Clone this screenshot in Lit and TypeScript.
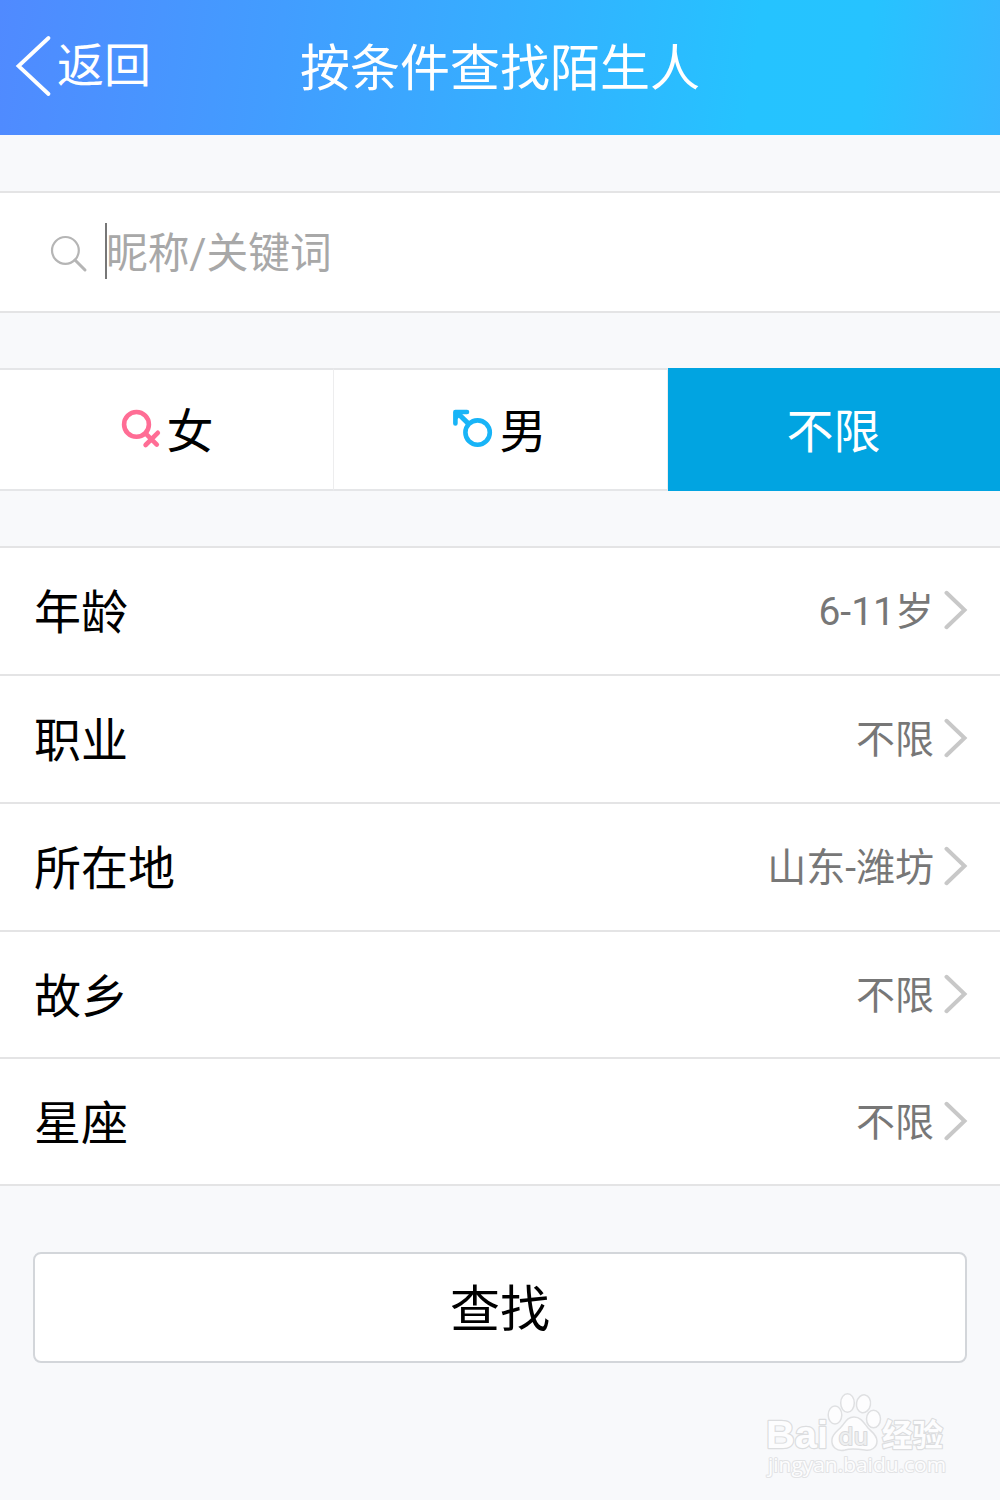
import { LitElement, html, css, svg } from "lit";
import { customElement, property, state } from "lit/decorators.js";

interface FilterRow {
  label: string;
  value: string;
}

const ROWS: FilterRow[] = [
  { label: "年龄", value: "6-11岁" },
  { label: "职业", value: "不限" },
  { label: "所在地", value: "山东-潍坊" },
  { label: "故乡", value: "不限" },
  { label: "星座", value: "不限" },
];

const femaleIcon = svg`
  <g fill="none" stroke="#ff6d95" stroke-linecap="round">
    <circle cx="16.5" cy="15.4" r="12.4" stroke-width="4.6" />
    <path d="M25.5 24.4 L36.8 35.6 M37.8 23.8 L25.6 36" stroke-width="4.6" />
  </g>`;

const maleIcon = svg`
  <g fill="none" stroke="#18b4f7">
    <circle cx="26.6" cy="23.6" r="12.2" stroke-width="4.6" />
    <path d="M17.4 14.6 L6.5 4" stroke-width="5" />
    <path d="M4.4 14.4 V3 H16" stroke-width="4.6" stroke-linecap="round" stroke-linejoin="round" />
    <path d="M5 4 H12.5 L5 11.5 Z" fill="#18b4f7" stroke="none" />
  </g>`;

@customElement("filter-row")
export class FilterRowElement extends LitElement {
  @property() label = "";
  @property() value = "";

  static styles = css`
    :host {
      display: flex;
      align-items: center;
      box-sizing: border-box;
      padding: 0 32px 0 34px;
      background: #fff;
    }
    .label {
      flex: 1;
      padding-top: 4px;
      font-size: 47px;
      line-height: 70px;
      color: #000;
    }
    .value {
      padding-top: 2px;
      font-size: 39px;
      line-height: 60px;
      color: #777;
    }
    .chevron {
      display: block;
      width: 24px;
      height: 40px;
      margin: 0 0 2px 10px;
    }
  `;

  render() {
    return html`
      <span class="label">${this.label}</span>
      <span class="value">${this.value}</span>
      <svg class="chevron" viewBox="0 0 24 40">
        <path d="M2.5 2.8 L20.5 20 L2.5 37.2" fill="none" stroke="#c8c8c8" stroke-width="4" stroke-linecap="round" />
      </svg>
    `;
  }
}

@customElement("app-root")
export class AppRoot extends LitElement {
  @state() private gender = "any";

  static styles = css`
    :host {
      display: flex;
      flex-direction: column;
      box-sizing: border-box;
      width: 1000px;
      height: 1500px;
      overflow: hidden;
      position: relative;
      background: #f8f9fb;
      font-family: Roboto, "Noto Sans CJK SC", sans-serif;
    }
    .header {
      display: grid;
      grid-template-columns: 1fr auto 1fr;
      align-items: center;
      height: 135px;
      flex: none;
      color: #fff;
      background: linear-gradient(97deg, #508aff 0%, #429dff 28%, #36aeff 50%, #25c3ff 75%, #26c3ff 86%, #37b6ff 100%);
    }
    .back {
      display: flex;
      align-items: center;
      padding: 0 0 4px 15px;
      font-size: 47px;
      line-height: 70px;
    }
    .back-icon {
      width: 37px;
      height: 62px;
      margin-right: 5px;
    }
    .title {
      font-size: 50px;
      line-height: 72px;
      font-weight: 400;
      margin: 0;
      padding-top: 3px;
    }
    .search {
      display: flex;
      align-items: center;
      box-sizing: border-box;
      height: 122px;
      flex: none;
      margin-top: 56px;
      padding-left: 50px;
      background: #fff;
      border-top: 2px solid #e4e4e5;
      border-bottom: 2px solid #e4e4e5;
    }
    .search-icon {
      width: 38px;
      height: 38px;
      margin: 3px 17px 0 0;
    }
    .caret {
      width: 2px;
      height: 56px;
      margin-bottom: 2px;
      background: #777;
    }
    .placeholder {
      font-size: 41.7px;
      line-height: 60px;
      padding-top: 4px;
      color: #a8a8a8;
      margin-left: -1px;
    }
    .genders {
      display: grid;
      grid-template-columns: 334px 334px 1fr;
      box-sizing: border-box;
      height: 123px;
      flex: none;
      margin-top: 55px;
    }
    .gender {
      display: flex;
      align-items: center;
      justify-content: center;
      gap: 5px;
      box-sizing: border-box;
      font-size: 47px;
      line-height: 70px;
      background: #fff;
      border-top: 2px solid #e5e6e8;
      border-bottom: 2px solid #e5e6e8;
      border-right: 1px solid #ededee;
    }
    .gender span {
      padding-top: 4px;
    }
    .gender.on {
      color: #fff;
      background: #01a4e1;
      border-color: #01a4e1;
    }
    .gender-icon {
      width: 42px;
      height: 42px;
    }
    .gender-icon.male {
      margin: 0 2px 0 -4px;
    }
    .rows {
      display: grid;
      grid-template-rows: 126px 126px 126px 125px 125px;
      gap: 2px;
      flex: none;
      margin-top: 55px;
      background: #e4e4e5;
      border-top: 2px solid #e4e4e5;
      border-bottom: 2px solid #e4e4e5;
    }
    .submit {
      display: flex;
      align-items: center;
      justify-content: center;
      box-sizing: border-box;
      height: 111px;
      flex: none;
      margin: 66px 33px 0;
      padding-top: 4px;
      font-size: 50px;
      line-height: 72px;
      background: #fff;
      border: 2px solid #d3d6da;
      border-radius: 8px;
    }
    .watermark {
      position: absolute;
      left: 760px;
      top: 1386px;
      width: 200px;
      height: 100px;
    }
    .mark-text {
      font-family: "Liberation Sans", "Noto Sans CJK SC", sans-serif;
      fill: #fdfdfe;
      stroke: #dcdddf;
      stroke-width: 2.4px;
      stroke-linejoin: round;
      paint-order: stroke;
      font-weight: 700;
    }
    .mark-du {
      font-family: "DejaVu Sans", sans-serif;
      font-weight: 400;
      fill: #eeeff0;
      stroke: #d9dadc;
      stroke-width: 2px;
    }
    .mark-url {
      font-family: "Open Sans", "Noto Sans", sans-serif;
      font-weight: 400;
      stroke: #e2e3e5;
      stroke-width: 2px;
    }
  `;

  private genderClass(id: string) {
    return this.gender === id ? "gender on" : "gender";
  }

  render() {
    return html`
      <header class="header">
        <div class="back">
          <svg class="back-icon" viewBox="0 0 37 62">
            <path d="M33.5 3 L3.5 31 L33.5 59" fill="none" stroke="#fff" stroke-width="3.8" stroke-linecap="round" />
          </svg>
          <span>返回</span>
        </div>
        <h1 class="title">按条件查找陌生人</h1>
      </header>

      <div class="search">
        <svg class="search-icon" viewBox="0 0 38 38">
          <g fill="none" stroke="#b5b5b5">
            <circle cx="15.4" cy="15.4" r="13.4" stroke-width="2.2" />
            <path d="M25 25 L35 35" stroke-width="3" stroke-linecap="round" />
          </g>
        </svg>
        <span class="caret"></span>
        <span class="placeholder">昵称/关键词</span>
      </div>

      <div class="genders">
        <div class=${this.genderClass("female")} @click=${() => (this.gender = "female")}>
          <svg class="gender-icon" viewBox="0 0 42 42">${femaleIcon}</svg>
          <span>女</span>
        </div>
        <div class=${this.genderClass("male")} @click=${() => (this.gender = "male")}>
          <svg class="gender-icon male" viewBox="0 0 42 42">${maleIcon}</svg>
          <span>男</span>
        </div>
        <div class=${this.genderClass("any")} @click=${() => (this.gender = "any")}>
          <span>不限</span>
        </div>
      </div>

      <div class="rows">
        ${ROWS.map((r) => html`<filter-row .label=${r.label} .value=${r.value}></filter-row>`)}
      </div>

      <div class="submit">查找</div>

      <svg class="watermark" viewBox="0 0 200 100">
        <text class="mark-text" x="6" y="62" font-size="39" textLength="62" lengthAdjust="spacingAndGlyphs">Bai</text>
        <g fill="#fdfdfe" stroke="#dfe0e2" stroke-width="1.5">
          <ellipse cx="75" cy="29" rx="6.8" ry="9" />
          <ellipse cx="87.5" cy="17" rx="6.8" ry="9.3" />
          <ellipse cx="103.5" cy="17.8" rx="7" ry="9" transform="rotate(10 103.5 17.8)" />
          <ellipse cx="113.5" cy="33" rx="7" ry="8.8" />
          <path d="M94 31 C101 31 104 37 108 42 C112 46 117 49 117 55 C117 62 111 65 105 64 C98 63 91 62 85 64 C77 66 71 61 72 53 C73 47 78 45 82 40 C86 35 88 31 94 31 Z" />
        </g>
        <text class="mark-text mark-du" x="78.5" y="58.5" font-size="23" textLength="30" lengthAdjust="spacingAndGlyphs">du</text>
        <text class="mark-text" x="122" y="60" font-size="31" textLength="61" lengthAdjust="spacingAndGlyphs">经验</text>
        <text class="mark-text mark-url" x="8" y="86" font-size="20" textLength="178" lengthAdjust="spacingAndGlyphs">jingyan.baidu.com</text>
      </svg>
    `;
  }
}
